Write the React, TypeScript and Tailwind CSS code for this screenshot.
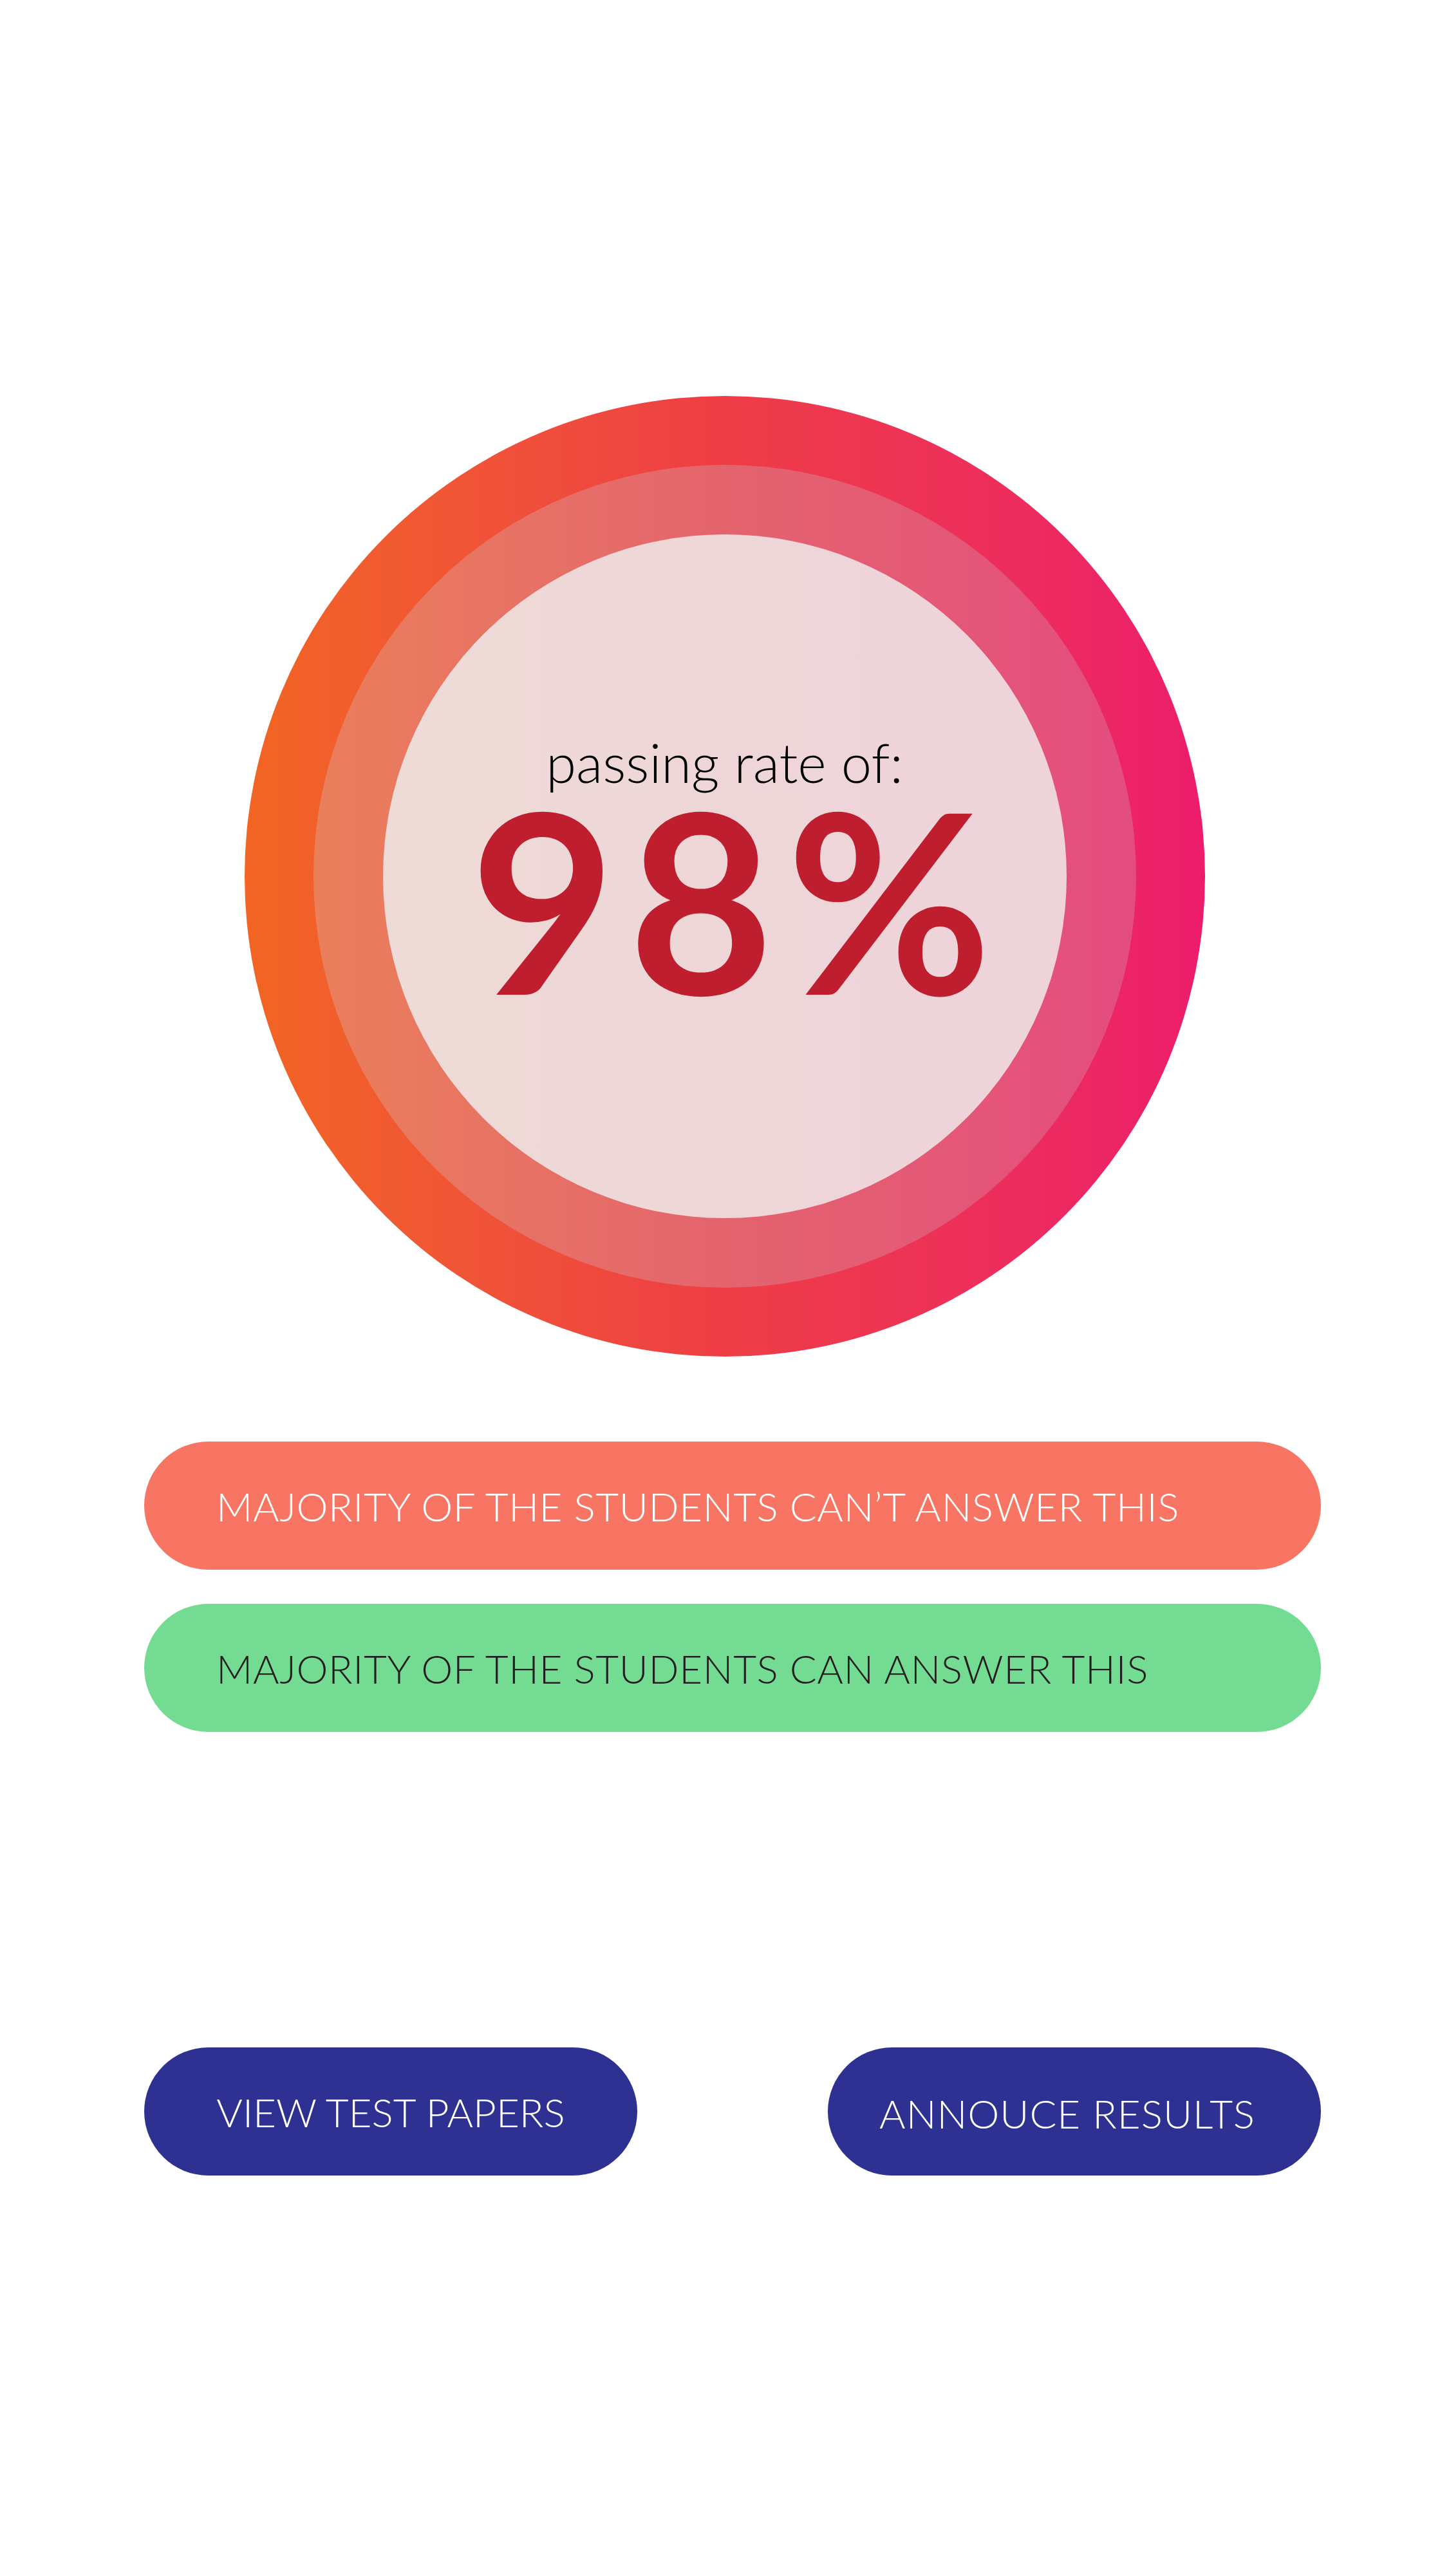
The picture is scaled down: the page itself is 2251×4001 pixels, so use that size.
import React from 'react';

const font = { fontFamily: 'Lato, "Open Sans", sans-serif' };

// Gauge in the middle of the page: three nested circles with the rate in the centre
const RateCircle: React.FC<{ rate: number }> = ({ rate }) => (
  <div className="mx-auto w-[1492px] h-[1492px] rounded-full bg-gradient-to-r from-[#F26522] via-[#EE3D45] to-[#EC1C6B] p-[107px]">
    <div className="w-full h-full rounded-full bg-gradient-to-r from-[#EA7F5A] via-[#E4646D] to-[#E44C80] p-[108px]">
      <div className="w-full h-full rounded-full bg-gradient-to-r from-[#EEDBD6] via-[#EED6D8] to-[#EED3DB] flex flex-col items-center justify-center pb-[36px]">
        <div className="text-[85px] leading-none font-light text-black">passing rate of:</div>
        <div className="mt-[19px] pl-[40px] text-[389px] leading-[300px] tracking-[20px] font-bold text-[#BE1E2D]">{rate}%</div>
      </div>
    </div>
  </div>
);

const Pill: React.FC<{ label: string; className: string }> = ({ label, className }) => (
  <div className={`h-[199px] rounded-full flex items-center text-[62px] font-light leading-none ${className}`}>
    {label}
  </div>
);

export default function App() {
  return (
    <div className="w-[2251px] h-[4001px] bg-white pt-[615px]" style={font}>
      <RateCircle rate={98} />

      <div className="ml-[224px] w-[1828px] mt-[132px] flex flex-col gap-[53px]">
        <Pill label="MAJORITY OF THE STUDENTS CAN’T ANSWER THIS" className="bg-[#F87564] text-white pl-[112px] tracking-[0.6px]" />
        <Pill label="MAJORITY OF THE STUDENTS CAN ANSWER THIS" className="bg-[#74DC92] text-[#231F20] pl-[112px] tracking-[0.6px]" />
      </div>

      <div className="ml-[224px] w-[1828px] mt-[490px] flex justify-between">
        <Pill label="VIEW TEST PAPERS" className="w-[766px] justify-center bg-[#2E3192] text-white" />
        <Pill label="ANNOUCE RESULTS" className="w-[766px] justify-center bg-[#2E3192] text-white pt-[4px] pr-[22px] tracking-[1px]" />
      </div>
    </div>
  );
}
